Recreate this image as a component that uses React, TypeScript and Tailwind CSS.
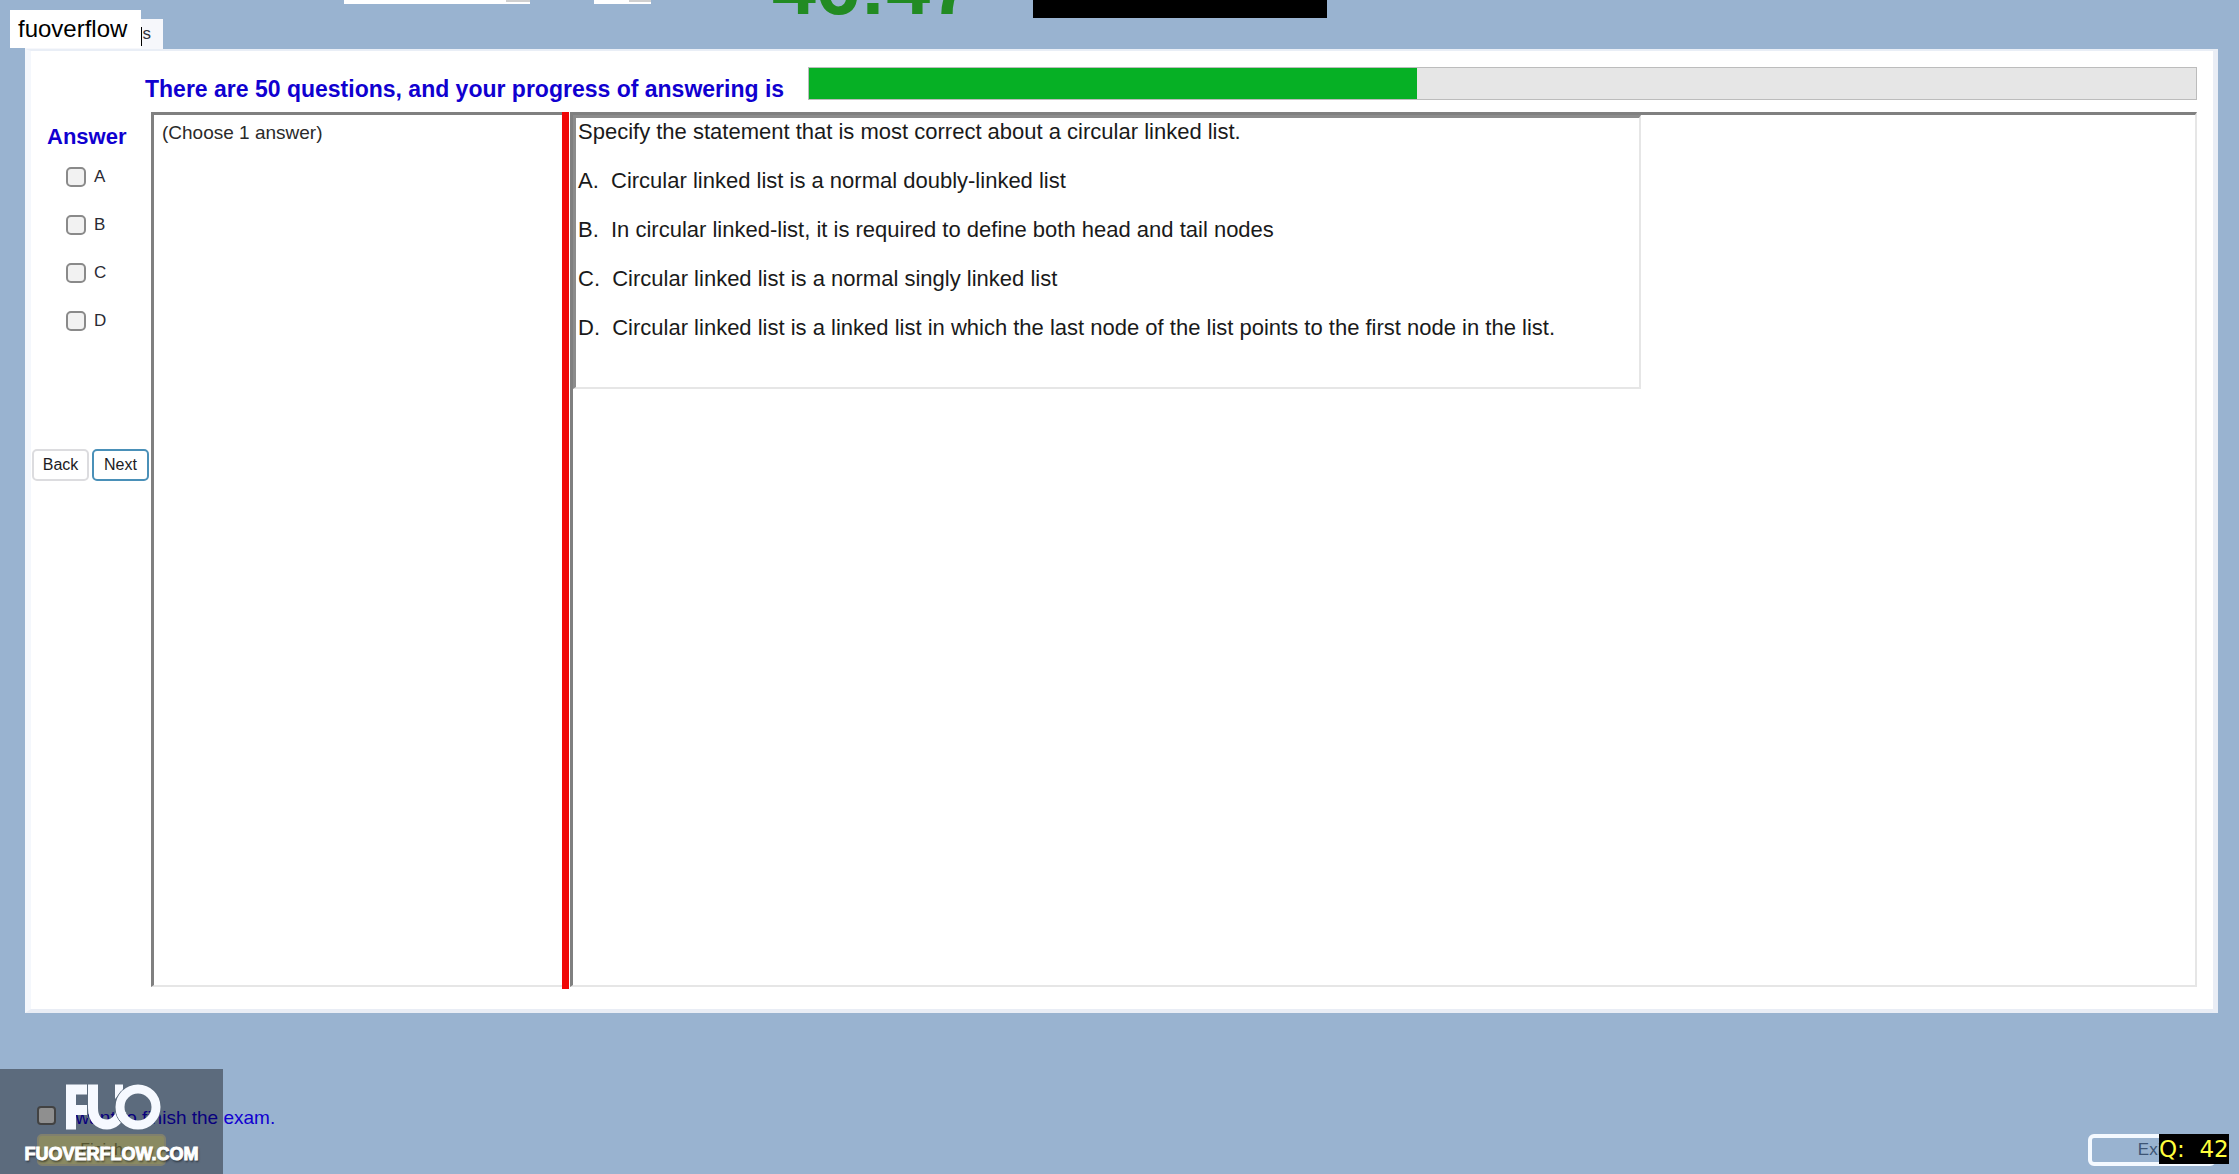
import React, { useState } from 'react';

const TOTAL_QUESTIONS = 50;
const PROGRESS = 43.8;

const CHOICES = [
  { key: 'A', text: 'Circular linked list is a normal doubly-linked list' },
  { key: 'B', text: 'In circular linked-list, it is required to define both head and tail nodes' },
  { key: 'C', text: 'Circular linked list is a normal singly linked list' },
  { key: 'D', text: 'Circular linked list is a linked list in which the last node of the list points to the first node in the list.' },
];

const TopBar: React.FC = () => (
  <header className="flex h-[19px] items-start pl-[344px]">
    <select
      aria-label="Font"
      className="-mt-7 h-[30px] w-[186px] shrink-0 appearance-none border-r-[24px] border-r-[#cfcfcf] bg-white shadow-[0_2px_0_#fff]"
    />
    <select
      aria-label="Size"
      className="-mt-7 ml-16 h-[30px] w-[57px] shrink-0 appearance-none border-r-[22px] border-r-[#cfcfcf] bg-white shadow-[0_2px_0_#fff]"
    />
    <div className="-mt-[53px] ml-[121px] w-[202px] shrink-0 text-[79px] leading-none font-bold text-[#228b22]">46:47</div>
    <div className="ml-[59px] h-[18px] w-[294px] shrink-0 bg-black" />
  </header>
);

const AnswerColumn: React.FC = () => {
  const [selected, setSelected] = useState<string[]>([]);

  const toggle = (key: string) => {
    setSelected(prev => (prev.includes(key) ? prev.filter(k => k !== key) : [...prev, key]));
  };

  return (
    <div className="flex w-[120px] shrink-0 flex-col">
      <h2 className="mt-3 pl-4 text-[22px] leading-[26px] font-bold text-[#1000d0]">Answer</h2>
      <div className="mt-[17px] flex flex-col gap-7 pl-[35px]">
        {CHOICES.map(({ key }) => (
          <label key={key} className="flex h-5 items-center gap-2 text-[17px] leading-5 text-[#2a2a33]">
            <input
              type="checkbox"
              checked={selected.includes(key)}
              onChange={() => toggle(key)}
              className="size-5 appearance-none rounded-[5px] border-2 border-[#8a8a8a] bg-[#f2f2f2] checked:bg-[#0067c0]"
            />
            {key}
          </label>
        ))}
      </div>
      <div className="mt-[118px] flex gap-[3px] pl-px">
        <button className="h-8 w-[57px] rounded-[5px] border-2 border-[#dcdcdf] bg-white text-[16px] text-[#1c1c24]">Back</button>
        <button className="h-8 w-[57px] rounded-[5px] border-2 border-[#4a90b8] bg-white text-[16px] text-[#1c1c24]">Next</button>
      </div>
    </div>
  );
};

const Question: React.FC = () => (
  <div className="mb-0.5 min-w-0 flex-1 border-t-[3px] border-r-2 border-b-2 border-l-[3px] border-t-[#808080] border-r-[#e6e6e6] border-b-[#e6e6e6] border-l-[#808080]">
    <div className="h-[274px] w-[1068px] max-w-full border-t-[3px] border-r-2 border-b-2 border-l-[3px] border-t-[#8c8c8c] border-r-[#e6e6e6] border-b-[#e6e6e6] border-l-[#8c8c8c] pl-0.5 text-[22px] text-[#1a1a1a]">
      <p className="leading-7">Specify the statement that is most correct about a circular linked list.</p>
      <ul className="mt-[10px]">
        {CHOICES.map(({ key, text }) => (
          <li key={key} className="leading-[49px] whitespace-pre">{`${key}.  ${text}`}</li>
        ))}
      </ul>
    </div>
  </div>
);

const Watermark: React.FC = () => (
  <div className="pointer-events-none absolute bottom-0 left-0 flex h-[105px] w-[223px] flex-col items-center bg-black/40 pt-[13px] text-white">
    <svg width="98" height="50" viewBox="0 0 98 50" fill="none" stroke="#f6f9ff" className="ml-1 shrink-0">
      <path d="M6 47.500V7.500H22M6 28H22" strokeWidth="10" />
      <path d="M28 2.500V26C28 37 34 42.500 42 42.500C51 42.500 54.500 35 56.500 29" strokeWidth="10" />
      <path d="M50 2.500H58V8L50 17Z" fill="#f6f9ff" stroke="none" />
      <circle cx="73" cy="25" r="23" stroke="#5b6a7b" strokeWidth="1" />
      <circle cx="73" cy="25" r="18" strokeWidth="9" />
      <path d="M22.500 2.500V36" stroke="#5b6a7b" strokeWidth="1" />
    </svg>
    <span className="mt-2 text-[18px] leading-7 font-bold [-webkit-text-stroke:1px_white] [text-shadow:1px_2px_2px_rgb(0_0_0/0.5)]">
      FUOVERFLOW.COM
    </span>
  </div>
);

const Footer: React.FC = () => (
  <footer className="relative flex h-[161px] shrink-0 items-end justify-between pr-[23px] pb-2 pl-[37px]">
    <div>
      <label className="mb-1 flex items-start gap-[9px] text-[19px] leading-6 text-[#1000d0]">
        <input type="checkbox" className="size-[19px] appearance-none rounded-[4px] border-2 border-[#6f6f6f] bg-[#efefef]" />
        I want to finish the exam.
      </label>
      <button className="block h-8 w-[129px] rounded-[5px] border-2 border-[#d6d6b8] bg-[#e6e6a4] text-[16px] text-[#8c8c50]">
        Finish
      </button>
    </div>
    <button className="h-8 w-[128px] rounded-[6px] border-4 border-[#f4f9ff] text-[17px] leading-6 text-[#3d5575]">Exit</button>
    <Watermark />
    <div className="absolute right-[10px] bottom-[10px] h-[30px] w-[70px] bg-black font-['DejaVu_Sans',sans-serif] text-[23px] leading-[30px] whitespace-pre text-[#ffff3c]">
      {'Q:  42'}
    </div>
  </footer>
);

export default function App() {
  return (
    <div className="relative flex min-h-screen flex-col overflow-hidden bg-[#99b3d0] font-['Liberation_Sans',Arial,sans-serif]">
      <TopBar />
      <div className="flex h-[30px] pl-[25px]">
        <button className="w-[138px] bg-[#f6f7fb] pr-3 text-right text-[17px] text-[#33333d]">es</button>
      </div>
      <div className="absolute top-[10px] left-[10px] flex h-[38px] w-[131px] items-center bg-white pl-2 text-[24px] leading-6 text-black">
        fuoverflow
      </div>
      <div className="absolute top-[27px] left-[141px] h-[19px] w-px bg-black" />

      <main className="mr-[21px] ml-[25px] flex flex-1 flex-col border-t-2 border-r-[5px] border-b-4 border-l-[6px] border-t-[#e9eef6] border-r-[#e9edf5] border-b-[#e9edf5] border-l-[#f4f7fc] bg-white pr-4 pb-5">
        <div className="mt-4 flex h-[33px] items-center gap-6 pl-[114px]">
          <h1 className="shrink-0 pt-2.5 text-[23px] leading-6 font-bold text-[#1000d0]">
            There are {TOTAL_QUESTIONS} questions, and your progress of answering is
          </h1>
          <div
            role="progressbar"
            aria-label="Answering progress"
            aria-valuenow={PROGRESS}
            className="h-full min-w-0 flex-1 border border-[#bcbcbc] bg-[#e6e6e6]"
          >
            <div className="h-full bg-[#06b025]" style={{ width: `${PROGRESS}%` }} />
          </div>
        </div>

        <div className="mt-3 flex flex-1">
          <AnswerColumn />
          <div className="mb-0.5 w-[411px] shrink-0 border-t-[3px] border-b-2 border-l-[3px] border-t-[#808080] border-b-[#e6e6e6] border-l-[#808080] pt-1.5 pl-2 text-[19px] leading-6 text-[#2a2a2a]">
            (Choose 1 answer)
          </div>
          <div className="mr-px w-[7px] shrink-0 bg-[#f00808]" />
          <Question />
        </div>
      </main>

      <Footer />
    </div>
  );
}
